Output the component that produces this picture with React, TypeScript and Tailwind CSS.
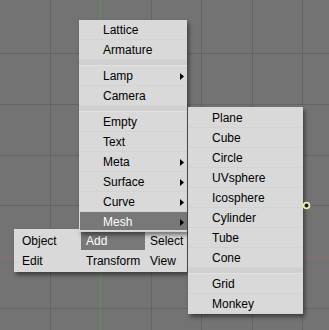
import clsx from 'clsx';

type Entry = { label?: string; arrow?: boolean; active?: boolean; sep?: boolean };

const addItems: Entry[] = [
  { label: 'Lattice' },
  { label: 'Armature' },
  { sep: true },
  { label: 'Lamp', arrow: true },
  { label: 'Camera' },
  { sep: true },
  { label: 'Empty' },
  { label: 'Text' },
  { label: 'Meta', arrow: true },
  { label: 'Surface', arrow: true },
  { label: 'Curve', arrow: true },
  { label: 'Mesh', arrow: true, active: true },
];

const meshItems: Entry[] = [
  { label: 'Plane' },
  { label: 'Cube' },
  { label: 'Circle' },
  { label: 'UVsphere' },
  { label: 'Icosphere' },
  { label: 'Cylinder' },
  { label: 'Tube' },
  { label: 'Cone' },
  { sep: true },
  { label: 'Grid' },
  { label: 'Monkey' },
];

const Arrow = () => (
  <svg width="4" height="7" viewBox="0 0 4 7" className="ml-auto">
    <polygon points="0,0 4,3.5 0,7" fill="#000" />
  </svg>
);

const MenuRow = ({ item }: { item: Entry }) => {
  if (item.sep) return <div className="h-[6px] bg-[#d0d0d0] shadow-[inset_0_-1px_0_#e2e2e2]" />;
  return (
    <div className="relative h-[20px] shadow-[inset_0_-1px_0_#d3d3d3]">
      {item.active && <span className="absolute left-[1px] right-0 top-0 bottom-[2px] bg-[#787878]" />}
      <div className={clsx('relative flex h-full items-center pl-[24px] pr-[3px]', item.active ? 'text-white' : 'text-black')}>
        <span>{item.label}</span>
        {item.arrow && <Arrow />}
      </div>
    </div>
  );
};

const vLines = [50, 151, 201, 252, 302];
const hLines = [53, 104, 155, 205, 308];

const Grid = () => (
  <svg className="absolute inset-0" width="329" height="330">
    {vLines.map((x) => (
      <line key={'v' + x} x1={x + 0.5} y1="0" x2={x + 0.5} y2="330" stroke="#646464" />
    ))}
    {hLines.map((y) => (
      <line key={'h' + y} x1="0" y1={y + 0.5} x2="329" y2={y + 0.5} stroke="#646464" />
    ))}
    <line x1="0" y1="257.5" x2="329" y2="257.5" stroke="#976a6a" />
    <line x1="100.5" y1="0" x2="100.5" y2="330" stroke="#5f8f5f" />
  </svg>
);

const menuBar = [
  ['Object', 'Add', 'Select'],
  ['Edit', 'Transform', 'View'],
];

export default function App() {
  return (
    <div className="relative w-[329px] h-[330px] overflow-hidden bg-[#737373] font-['Liberation_Sans',Arial,sans-serif] text-[12px] leading-none">
      <Grid />

      {/* header menu strip */}
      <div className="absolute left-[14px] top-[229px] w-[173px] pt-[2px] pb-[1px] bg-[#d9d9d9] shadow-[2px_3px_4px_rgba(0,0,0,0.45)]">
        {menuBar.map((row, r) => (
          <div key={r} className="grid h-[20px] grid-cols-[67px_64px_42px]">
            {row.map((label, c) => {
              const active = r === 0 && c === 1;
              return (
                <div key={label} className="relative">
                  {active && <span className="absolute inset-x-0 top-[1px] bottom-[1px] bg-[#787878]" />}
                  <div className={clsx('relative flex h-full items-center', c === 0 ? 'pl-[8px]' : 'pl-[5px]', active ? 'text-white' : 'text-black')}>
                    {label}
                  </div>
                </div>
              );
            })}
          </div>
        ))}
      </div>

      {/* Add menu */}
      <div className="absolute left-[79px] top-[20px] w-[108px] bg-[#d9d9d9] shadow-[2px_3px_4px_rgba(0,0,0,0.45)]">
        {addItems.map((it, i) => (
          <MenuRow key={i} item={it} />
        ))}
      </div>

      {/* Mesh submenu */}
      <div className="absolute left-[188px] top-[107px] w-[115px] pt-[1px] bg-[#d9d9d9] shadow-[2px_3px_4px_rgba(0,0,0,0.45)]">
        {meshItems.map((it, i) => (
          <MenuRow key={i} item={it} />
        ))}
      </div>

      {/* object origin */}
      <svg className="absolute left-[302px] top-[201px]" width="9" height="9" viewBox="0 0 9 9">
        <circle cx="4.5" cy="4.5" r="3.8" fill="#f2eeb0" />
        <circle cx="4.5" cy="4.5" r="2" fill="#1c1c1c" />
      </svg>
    </div>
  );
}
